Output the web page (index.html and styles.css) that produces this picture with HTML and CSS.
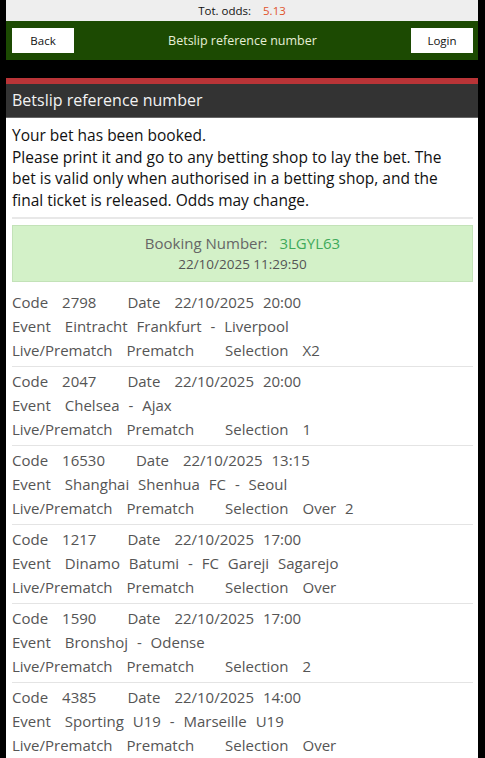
FILE: index.html
```html
<!DOCTYPE html>
<html>
<head>
<meta charset="utf-8">
<link rel="stylesheet" href="styles.css">
</head>
<body>
<div class="page">
  <div class="topbar">Tot. odds: <span class="odds">5.13</span></div>
  <div class="navbar">
    <div class="btn">Back</div>
    <div class="navtitle">Betslip reference number</div>
    <div class="btn">Login</div>
  </div>
  <div class="spacer"></div>
  <div class="redbar"></div>
  <div class="panelhead">Betslip reference number</div>
  <div class="content">
    <div class="intro">Your bet has been booked.<br>Please print it and go to any betting shop to lay the bet. The bet is valid only when authorised in a betting shop, and the final ticket is released. Odds may change.</div>
    <div class="booking">
      <div class="bnum">Booking Number: <span class="code">3LGYL63</span></div>
      <div class="bdate">22/10/2025 11:29:50</div>
    </div>
    <div class="row">
      <div class="line"><span class="lbl">Code</span><span class="val">2798</span><span class="lbl">Date</span><span class="val">22/10/2025 20:00</span></div>
      <div class="line"><span class="lbl">Event</span><span class="val">Eintracht Frankfurt - Liverpool</span></div>
      <div class="line"><span class="lbl">Live/Prematch</span><span class="val">Prematch</span><span class="lbl">Selection</span><span class="val">X2</span></div>
    </div>
    <div class="row">
      <div class="line"><span class="lbl">Code</span><span class="val">2047</span><span class="lbl">Date</span><span class="val">22/10/2025 20:00</span></div>
      <div class="line"><span class="lbl">Event</span><span class="val">Chelsea - Ajax</span></div>
      <div class="line"><span class="lbl">Live/Prematch</span><span class="val">Prematch</span><span class="lbl">Selection</span><span class="val">1</span></div>
    </div>
    <div class="row">
      <div class="line"><span class="lbl">Code</span><span class="val">16530</span><span class="lbl">Date</span><span class="val">22/10/2025 13:15</span></div>
      <div class="line"><span class="lbl">Event</span><span class="val">Shanghai Shenhua FC - Seoul</span></div>
      <div class="line"><span class="lbl">Live/Prematch</span><span class="val">Prematch</span><span class="lbl">Selection</span><span class="val">Over 2</span></div>
    </div>
    <div class="row">
      <div class="line"><span class="lbl">Code</span><span class="val">1217</span><span class="lbl">Date</span><span class="val">22/10/2025 17:00</span></div>
      <div class="line"><span class="lbl">Event</span><span class="val">Dinamo Batumi - FC Gareji Sagarejo</span></div>
      <div class="line"><span class="lbl">Live/Prematch</span><span class="val">Prematch</span><span class="lbl">Selection</span><span class="val">Over</span></div>
    </div>
    <div class="row">
      <div class="line"><span class="lbl">Code</span><span class="val">1590</span><span class="lbl">Date</span><span class="val">22/10/2025 17:00</span></div>
      <div class="line"><span class="lbl">Event</span><span class="val">Bronshoj - Odense</span></div>
      <div class="line"><span class="lbl">Live/Prematch</span><span class="val">Prematch</span><span class="lbl">Selection</span><span class="val">2</span></div>
    </div>
    <div class="row">
      <div class="line"><span class="lbl">Code</span><span class="val">4385</span><span class="lbl">Date</span><span class="val">22/10/2025 14:00</span></div>
      <div class="line"><span class="lbl">Event</span><span class="val">Sporting U19 - Marseille U19</span></div>
      <div class="line"><span class="lbl">Live/Prematch</span><span class="val">Prematch</span><span class="lbl">Selection</span><span class="val">Over</span></div>
    </div>
  </div>
</div>
</body>
</html>
```

FILE: styles.css
```css
html, body {
  margin: 0;
  padding: 0;
  background: #000;
}
body {
  font-family: "Open Sans", "Noto Sans", sans-serif;
  overflow: hidden;
  height: 758px;
}
.page {
  padding: 0 7px 0 6px;
}
.topbar {
  height: 21px;
  background: #eeeeee;
  color: #111;
  font-size: 11.5px;
  line-height: 21px;
  text-align: center;
}
.odds {
  color: #e0532b;
  margin-left: 9px;
}
.navbar {
  height: 39px;
  background: #1c4a02;
  display: flex;
  align-items: center;
  justify-content: space-between;
  padding: 0 5px 0 6px;
}
.btn {
  width: 62px;
  height: 25px;
  background: #fff;
  color: #111;
  font-size: 11.5px;
  line-height: 25px;
  text-align: center;
}
.navtitle {
  color: #e6efd6;
  font-size: 12.5px;
}
.spacer {
  height: 18px;
}
.redbar {
  height: 6px;
  background: #b93437;
}
.panelhead {
  height: 33px;
  background: #333333;
  color: #f2f2f2;
  font-size: 16px;
  line-height: 33px;
  padding-left: 6px;
  border-bottom: 1px solid #666;
}
.content {
  background: #fff;
  padding: 7px 5px 0 6px;
}
.intro {
  color: #111;
  font-size: 15.5px;
  line-height: 21.5px;
  padding: 0 12px 6px 0;
  border-bottom: 2px solid #e8e8e8;
}
.booking {
  margin-top: 6px;
  height: 55px;
  background: #d3f1c8;
  border: 1px solid #c3e2b8;
  text-align: center;
  display: flex;
  flex-direction: column;
  justify-content: center;
}
.bnum {
  color: #666;
  font-size: 15px;
  line-height: 21px;
}
.code {
  color: #3faa5a;
  margin-left: 8px;
}
.bdate {
  color: #555;
  font-size: 13.5px;
  line-height: 20px;
}
.row {
  padding: 8px 0 4px;
  border-bottom: 1px solid #e4e4e4;
}
.row + .row {
  padding-top: 2px;
}
.line {
  color: #555;
  font-size: 15px;
  line-height: 24px;
  white-space: nowrap;
  word-spacing: 5px;
}
.lbl {
  margin-right: 14px;
}
.val {
  margin-right: 31px;
}
```
